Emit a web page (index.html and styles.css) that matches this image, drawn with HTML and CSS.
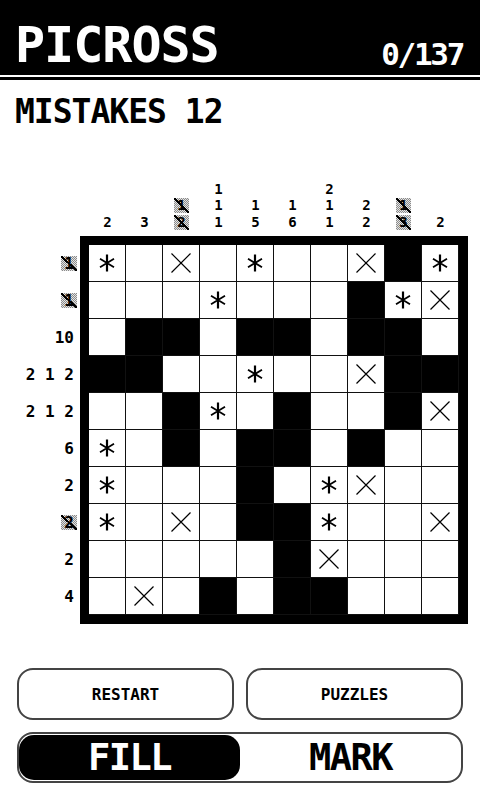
FILE: index.html
```html
<!DOCTYPE html>
<html>
<head>
<meta charset="utf-8">
<link rel="stylesheet" href="styles.css">
</head>
<body>
<svg class="defs" width="0" height="0">
  <symbol id="ast" viewBox="0 0 16 18"><path d="M8 0.5V17.5" stroke="#000" stroke-width="2.2"/><path d="M1 4.8L15 13.2M1 13.2L15 4.8" stroke="#000" stroke-width="1.8"/></symbol>
  <symbol id="cross" viewBox="0 0 20 20"><path d="M0.5 0.5L19.5 19.5M0.5 19.5L19.5 0.5" stroke="#000" stroke-width="1.2"/></symbol>
</svg>
<div class="header">
  <div class="title">PICROSS</div>
  <div class="score">0/137</div>
</div>
<div class="rule"></div>
<div class="mistakes">MISTAKES 12</div>

<div class="board">
  <div class="corner"></div>
  <div class="cols">
    <div class="col"><div class="l">2</div></div>
    <div class="col"><div class="l">3</div></div>
    <div class="col"><div class="l"><span class="x">1</span></div><div class="l"><span class="x">2</span></div></div>
    <div class="col"><div class="l">1</div><div class="l">1</div><div class="l">1</div></div>
    <div class="col"><div class="l">1</div><div class="l">5</div></div>
    <div class="col"><div class="l">1</div><div class="l">6</div></div>
    <div class="col"><div class="l">2</div><div class="l">1</div><div class="l">1</div></div>
    <div class="col"><div class="l">2</div><div class="l">2</div></div>
    <div class="col"><div class="l"><span class="x">1</span></div><div class="l"><span class="x">3</span></div></div>
    <div class="col"><div class="l">2</div></div>
  </div>
  <div class="rows">
    <div class="r"><span class="x">1</span></div>
    <div class="r"><span class="x">1</span></div>
    <div class="r">10</div>
    <div class="r">2 1 2</div>
    <div class="r">2 1 2</div>
    <div class="r">6</div>
    <div class="r">2</div>
    <div class="r"><span class="x">2</span></div>
    <div class="r">2</div>
    <div class="r">4</div>
  </div>
  <div class="grid">
    <!-- row 0 -->
    <div class="c"><svg class="a"><use href="#ast"/></svg></div>
    <div class="c"></div>
    <div class="c"><svg class="m"><use href="#cross"/></svg></div>
    <div class="c"></div>
    <div class="c"><svg class="a"><use href="#ast"/></svg></div>
    <div class="c"></div>
    <div class="c"></div>
    <div class="c"><svg class="m"><use href="#cross"/></svg></div>
    <div class="c f"></div>
    <div class="c"><svg class="a"><use href="#ast"/></svg></div>
    <!-- row 1 -->
    <div class="c"></div>
    <div class="c"></div>
    <div class="c"></div>
    <div class="c"><svg class="a"><use href="#ast"/></svg></div>
    <div class="c"></div>
    <div class="c"></div>
    <div class="c"></div>
    <div class="c f"></div>
    <div class="c"><svg class="a"><use href="#ast"/></svg></div>
    <div class="c"><svg class="m"><use href="#cross"/></svg></div>
    <!-- row 2 -->
    <div class="c"></div>
    <div class="c f"></div>
    <div class="c f"></div>
    <div class="c"></div>
    <div class="c f"></div>
    <div class="c f"></div>
    <div class="c"></div>
    <div class="c f"></div>
    <div class="c f"></div>
    <div class="c"></div>
    <!-- row 3 -->
    <div class="c f"></div>
    <div class="c f"></div>
    <div class="c"></div>
    <div class="c"></div>
    <div class="c"><svg class="a"><use href="#ast"/></svg></div>
    <div class="c"></div>
    <div class="c"></div>
    <div class="c"><svg class="m"><use href="#cross"/></svg></div>
    <div class="c f"></div>
    <div class="c f"></div>
    <!-- row 4 -->
    <div class="c"></div>
    <div class="c"></div>
    <div class="c f"></div>
    <div class="c"><svg class="a"><use href="#ast"/></svg></div>
    <div class="c"></div>
    <div class="c f"></div>
    <div class="c"></div>
    <div class="c"></div>
    <div class="c f"></div>
    <div class="c"><svg class="m"><use href="#cross"/></svg></div>
    <!-- row 5 -->
    <div class="c"><svg class="a"><use href="#ast"/></svg></div>
    <div class="c"></div>
    <div class="c f"></div>
    <div class="c"></div>
    <div class="c f"></div>
    <div class="c f"></div>
    <div class="c"></div>
    <div class="c f"></div>
    <div class="c"></div>
    <div class="c"></div>
    <!-- row 6 -->
    <div class="c"><svg class="a"><use href="#ast"/></svg></div>
    <div class="c"></div>
    <div class="c"></div>
    <div class="c"></div>
    <div class="c f"></div>
    <div class="c"></div>
    <div class="c"><svg class="a"><use href="#ast"/></svg></div>
    <div class="c"><svg class="m"><use href="#cross"/></svg></div>
    <div class="c"></div>
    <div class="c"></div>
    <!-- row 7 -->
    <div class="c"><svg class="a"><use href="#ast"/></svg></div>
    <div class="c"></div>
    <div class="c"><svg class="m"><use href="#cross"/></svg></div>
    <div class="c"></div>
    <div class="c f"></div>
    <div class="c f"></div>
    <div class="c"><svg class="a"><use href="#ast"/></svg></div>
    <div class="c"></div>
    <div class="c"></div>
    <div class="c"><svg class="m"><use href="#cross"/></svg></div>
    <!-- row 8 -->
    <div class="c"></div>
    <div class="c"></div>
    <div class="c"></div>
    <div class="c"></div>
    <div class="c"></div>
    <div class="c f"></div>
    <div class="c"><svg class="m"><use href="#cross"/></svg></div>
    <div class="c"></div>
    <div class="c"></div>
    <div class="c"></div>
    <!-- row 9 -->
    <div class="c"></div>
    <div class="c"><svg class="m"><use href="#cross"/></svg></div>
    <div class="c"></div>
    <div class="c f"></div>
    <div class="c"></div>
    <div class="c f"></div>
    <div class="c f"></div>
    <div class="c"></div>
    <div class="c"></div>
    <div class="c"></div>
  </div>
</div>

<div class="buttons">
  <div class="btn">RESTART</div>
  <div class="btn">PUZZLES</div>
</div>
<div class="toggle">
  <div class="opt on">FILL</div>
  <div class="opt">MARK</div>
</div>
</body>
</html>
```
FILE: styles.css
```css
html, body {
  margin: 0;
  padding: 0;
  background: #fff;
}
body {
  width: 480px;
  height: 800px;
  overflow: hidden;
  font-family: "DejaVu Sans Mono", "Liberation Mono", monospace;
  font-weight: 700;
  color: #000;
}
.defs {
  display: block;
  width: 0;
  height: 0;
  overflow: hidden;
}
.header {
  height: 75px;
  background: #000;
  color: #fff;
  display: flex;
  justify-content: space-between;
  align-items: flex-start;
  padding: 0 17px 0 15px;
}
.title {
  font-size: 50px;
  line-height: 50px;
  margin-top: 20px;
  letter-spacing: -1px;
}
.score {
  font-size: 31px;
  line-height: 31px;
  margin-top: 39px;
  letter-spacing: -2.3px;
}
.rule {
  height: 3px;
  margin-top: 2px;
  background: #000;
}
.mistakes {
  font-size: 33px;
  line-height: 33px;
  margin: 15px 0 0 15px;
  letter-spacing: -1px;
}
.board {
  display: grid;
  grid-template-columns: 80px 388px;
  margin-top: 53px;
}
.cols {
  display: grid;
  grid-template-columns: repeat(10, 37px);
  padding: 0 9px 6px 9px;
  align-items: end;
}
.col {
  display: flex;
  flex-direction: column;
  align-items: center;
  font-size: 14px;
}
.l {
  height: 16.4px;
  line-height: 16.4px;
}
.x {
  display: inline-block;
  padding: 0 3px;
  margin: 0 -3px;
  background:
    linear-gradient(to top right, transparent calc(50% - 1px), #000 calc(50% - 1px), #000 calc(50% + 1px), transparent calc(50% + 1px)),
    repeating-conic-gradient(#8a8a8a 0 25%, #e4e4e4 0 50%) 0 0 / 2px 2px;
}
.col .x {
  line-height: 15px;
}
.r .x {
  line-height: 15px;
}
.rows {
  display: grid;
  grid-template-rows: repeat(10, 37px);
  padding-top: 9px;
  font-size: 16px;
}
.r {
  display: flex;
  align-items: center;
  justify-content: flex-end;
  padding-right: 6px;
  white-space: pre;
}
.grid {
  display: grid;
  grid-template-columns: repeat(10, 37px);
  grid-template-rows: repeat(10, 37px);
  border: 9px solid #000;
  background: #000;
}
.c {
  box-sizing: border-box;
  background: #fff;
  border-right: 1px solid #111;
  border-bottom: 1px solid #111;
  display: flex;
  align-items: center;
  justify-content: center;
}
.c.f {
  background: #000;
}
.a {
  width: 16px;
  height: 18px;
}
.m {
  width: 20px;
  height: 20px;
}
.buttons {
  display: flex;
  gap: 12px;
  padding: 0 17px;
  margin-top: 44px;
}
.btn {
  flex: 1;
  height: 52px;
  box-sizing: border-box;
  border: 2px solid #444;
  border-radius: 16px;
  display: flex;
  align-items: center;
  justify-content: center;
  font-size: 16px;
}
.toggle {
  margin: 12px 17px 0 17px;
  height: 51px;
  box-sizing: border-box;
  border: 2px solid #444;
  border-radius: 16px;
  display: flex;
  padding: 1px 0;
}
.opt {
  flex: 1;
  display: flex;
  align-items: center;
  justify-content: center;
  font-size: 37px;
  letter-spacing: -1.5px;
  border-radius: 15px;
}
.opt.on {
  background: #000;
  color: #fff;
}
```
